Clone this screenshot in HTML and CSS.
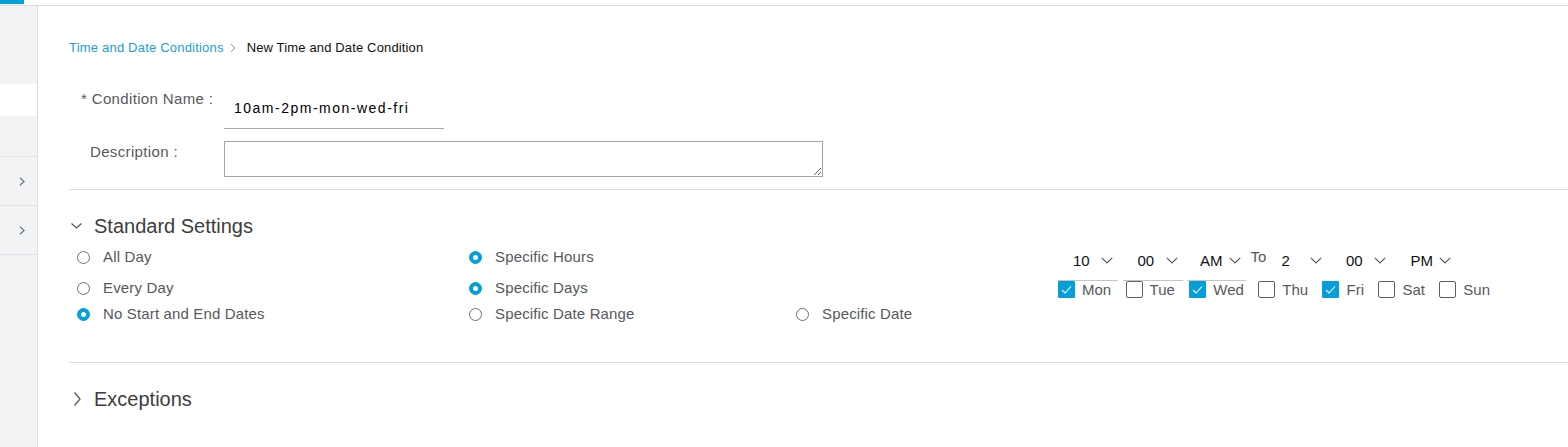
FILE: index.html
```html
<!DOCTYPE html>
<html lang="en">
<head>
<meta charset="utf-8">
<title>New Time and Date Condition</title>
<link rel="stylesheet" href="styles.css">
</head>
<body>
<div class="topbar"><div class="accent"></div></div>
<div class="layout">
  <aside class="sidebar">
    <div class="sb-top"></div>
    <div class="sb-active"></div>
    <div class="sb-plain"></div>
    <div class="sb-row"><svg class="sb-chev" viewBox="0 0 6 9" width="6" height="9"><polyline points="1,0.8 5,4.5 1,8.2" fill="none" stroke="currentColor" stroke-width="1.2"/></svg></div>
    <div class="sb-row"><svg class="sb-chev" viewBox="0 0 6 9" width="6" height="9"><polyline points="1,0.8 5,4.5 1,8.2" fill="none" stroke="currentColor" stroke-width="1.2"/></svg></div>
  </aside>
  <main class="main">
    <nav class="crumbs">
      <a class="crumb-link">Time and Date Conditions</a>
      <svg class="crumb-chev" viewBox="0 0 6 10" width="6" height="10"><polyline points="1,1 5,5 1,9" fill="none" stroke="currentColor" stroke-width="1"/></svg>
      <span class="crumb-current">New Time and Date Condition</span>
    </nav>

    <div class="form-row first-row">
      <label class="form-label"><span class="req">* </span>Condition Name :</label>
      <input class="name-input" type="text" value="10am-2pm-mon-wed-fri">
    </div>
    <div class="form-row desc-row">
      <label class="form-label">Description :</label>
      <textarea class="desc"></textarea>
    </div>

    <hr class="divider">

    <div class="section-head">
      <span class="head-icon"><svg viewBox="0 0 16 24" width="16" height="24"><polyline points="2.5,9.5 7.5,14 12.5,9.5" fill="none" stroke="currentColor" stroke-width="1.3"/></svg></span>
      <span>Standard Settings</span>
    </div>

    <div class="settings-grid">
      <div class="time-block">
        <div class="time-row">
          <div class="tsel lined"><span>10</span><svg class="sel-chev" viewBox="0 0 12 7" width="12" height="7"><polyline points="0.8,0.8 6,6 11.2,0.8" fill="none" stroke="currentColor" stroke-width="1.2"/></svg></div>
          <div class="tsel lined"><span>00</span><svg class="sel-chev" viewBox="0 0 12 7" width="12" height="7"><polyline points="0.8,0.8 6,6 11.2,0.8" fill="none" stroke="currentColor" stroke-width="1.2"/></svg></div>
          <div class="tsel lined narrow"><span>AM</span><svg class="sel-chev" viewBox="0 0 12 7" width="12" height="7"><polyline points="0.8,0.8 6,6 11.2,0.8" fill="none" stroke="currentColor" stroke-width="1.2"/></svg></div>
          <span class="to">To</span>
          <div class="tsel"><span>2</span><svg class="sel-chev" viewBox="0 0 12 7" width="12" height="7"><polyline points="0.8,0.8 6,6 11.2,0.8" fill="none" stroke="currentColor" stroke-width="1.2"/></svg></div>
          <div class="tsel"><span>00</span><svg class="sel-chev" viewBox="0 0 12 7" width="12" height="7"><polyline points="0.8,0.8 6,6 11.2,0.8" fill="none" stroke="currentColor" stroke-width="1.2"/></svg></div>
          <div class="tsel"><span>PM</span><svg class="sel-chev" viewBox="0 0 12 7" width="12" height="7"><polyline points="0.8,0.8 6,6 11.2,0.8" fill="none" stroke="currentColor" stroke-width="1.2"/></svg></div>
        </div>
        <div class="day-row">
          <label class="day"><span class="cbox checked"><svg viewBox="0 0 17 17" width="17" height="17"><polyline points="4,9 7,12 13,5.5" fill="none" stroke="#fff" stroke-width="1.1"/></svg></span>Mon</label>
          <label class="day"><span class="cbox"></span>Tue</label>
          <label class="day"><span class="cbox checked"><svg viewBox="0 0 17 17" width="17" height="17"><polyline points="4,9 7,12 13,5.5" fill="none" stroke="#fff" stroke-width="1.1"/></svg></span>Wed</label>
          <label class="day"><span class="cbox"></span>Thu</label>
          <label class="day"><span class="cbox checked"><svg viewBox="0 0 17 17" width="17" height="17"><polyline points="4,9 7,12 13,5.5" fill="none" stroke="#fff" stroke-width="1.1"/></svg></span>Fri</label>
          <label class="day"><span class="cbox"></span>Sat</label>
          <label class="day"><span class="cbox"></span>Sun</label>
        </div>
      </div>

      <label class="opt"><span class="radio"></span>All Day</label>
      <label class="opt"><span class="radio on"></span>Specific Hours</label>
      <div></div>
      <label class="opt"><span class="radio"></span>Every Day</label>
      <label class="opt"><span class="radio on"></span>Specific Days</label>
      <div></div>
      <label class="opt"><span class="radio on"></span>No Start and End Dates</label>
      <label class="opt"><span class="radio"></span>Specific Date Range</label>
      <label class="opt"><span class="radio"></span>Specific Date</label>
    </div>

    <hr class="divider lower">

    <div class="section-head exceptions">
      <span class="head-icon"><svg viewBox="0 0 16 24" width="16" height="24"><polyline points="5.5,5.5 11,12 5.5,18.5" fill="none" stroke="currentColor" stroke-width="1.3"/></svg></span>
      <span>Exceptions</span>
    </div>
  </main>
</div>
</body>
</html>
```

FILE: styles.css
```css
* { box-sizing: border-box; }

html, body {
  margin: 0;
  padding: 0;
  background: #ffffff;
  font-family: "Liberation Sans", Arial, sans-serif;
  color: #58585b;
  overflow: hidden;
}

.topbar {
  height: 6px;
  border-bottom: 1px solid #dcdcdc;
}
.accent {
  width: 24px;
  height: 4px;
  background: #049fd9;
}

.layout {
  display: flex;
  height: 441px;
}

.sidebar {
  width: 38px;
  flex: none;
  background: #f2f3f5;
  border-right: 1px solid #dcdde0;
  display: flex;
  flex-direction: column;
}
.sb-top { height: 78px; }
.sb-active { height: 32px; background: #ffffff; }
.sb-plain { height: 41px; border-bottom: 1px solid #e0e2e6; }
.sb-row {
  height: 49px;
  border-bottom: 1px solid #e0e2e6;
  display: flex;
  align-items: center;
  justify-content: flex-end;
  padding-right: 12px;
  color: #66728a;
}
.sb-chev { display: block; }

.main {
  flex: 1;
  padding-left: 31px;
  min-width: 0;
}

.crumbs {
  margin-top: 34px;
  height: 16px;
  display: flex;
  align-items: center;
  font-size: 13px;
  line-height: 16px;
}
.crumb-link { color: #1ba0d7; letter-spacing: 0.2px; }
.crumb-chev { color: #9b9b9b; margin: 0 11px 0 6px; display: block; }
.crumb-current { color: #111111; letter-spacing: 0.15px; }

.form-row {
  display: flex;
  align-items: flex-start;
}
.first-row { margin-top: 32px; }
.desc-row { margin-top: 12px; }

.form-label {
  width: 155px;
  flex: none;
  padding-left: 21px;
  font-size: 15px;
  line-height: 22px;
  color: #58585b;
  letter-spacing: 0.35px;
}
.req { margin-left: -9px; }

.name-input {
  width: 220px;
  height: 41px;
  margin: 0;
  border: none;
  border-bottom: 1px solid #a9a9a9;
  padding: 0 0 0 10px;
  font-family: "Liberation Sans", Arial, sans-serif;
  font-size: 14px;
  letter-spacing: 1.5px;
  color: #000000;
  background: transparent;
  outline: none;
}

.desc {
  display: block;
  width: 599px;
  height: 36px;
  margin: 0;
  padding: 0;
  border: 1px solid #a5a5a5;
  border-radius: 0;
  resize: both;
  font-family: "Liberation Sans", Arial, sans-serif;
}

.divider {
  margin: 12px 0 0 0;
  border: none;
  border-top: 1px solid #dedede;
  height: 0;
}
.divider.lower { margin-top: 37px; }

.section-head {
  margin-top: 24px;
  display: flex;
  align-items: center;
  height: 24px;
  font-size: 20px;
  line-height: 24px;
  color: #3d3d40;
}
.head-icon {
  width: 16px;
  height: 24px;
  margin-right: 9px;
  color: #58585b;
  display: block;
}
.head-icon svg { display: block; }

.settings-grid {
  margin-top: 3px;
  padding-left: 8px;
  display: grid;
  grid-template-columns: 392px 327px 262px 1fr;
  grid-template-rows: 32px 30px 22px;
  align-items: center;
}

.opt {
  display: flex;
  align-items: center;
  font-size: 15px;
  line-height: 20px;
  letter-spacing: 0.15px;
  color: #58585b;
}
.radio {
  width: 13px;
  height: 13px;
  border: 1px solid #6f6f72;
  border-radius: 50%;
  margin-right: 13px;
  flex: none;
  position: relative;
  background: #ffffff;
}
.radio.on {
  background: #049fd9;
  border-color: #049fd9;
}
.radio.on::after {
  content: "";
  position: absolute;
  left: 3px;
  top: 3px;
  width: 5px;
  height: 5px;
  border-radius: 50%;
  background: #ffffff;
}

.time-block {
  grid-column: 4;
  grid-row: 1 / span 2;
  align-self: start;
  display: flex;
  flex-direction: column;
}
.time-row {
  display: flex;
  height: 40px;
}
.tsel {
  width: 60px;
  height: 40px;
  margin-right: 4.5px;
  padding: 0 5px 0 15px;
  display: flex;
  align-items: center;
  justify-content: space-between;
  font-size: 15px;
  color: #111111;
  border-bottom: 1px solid transparent;
}
.tsel.lined { border-bottom-color: #c4c4c4; }
.tsel.narrow { width: 59px; padding-left: 13px; }
.sel-chev { color: #58585b; display: block; }
.to {
  width: 16px;
  padding-top: 7px;
  font-size: 15px;
  line-height: 18px;
  color: #58585b;
}

.day-row {
  display: flex;
  align-items: center;
  gap: 14.4px;
  height: 17px;
}
.day {
  display: flex;
  align-items: center;
  gap: 7px;
  font-size: 15px;
  line-height: 15px;
  color: #58585b;
}
.cbox {
  width: 17px;
  height: 17px;
  flex: none;
  border: 1px solid #5f5f62;
  border-radius: 2px;
  background: #ffffff;
  display: block;
}
.cbox.checked {
  border: none;
  background: #049fd9;
  border-radius: 1px;
}
.cbox svg { display: block; }
```
